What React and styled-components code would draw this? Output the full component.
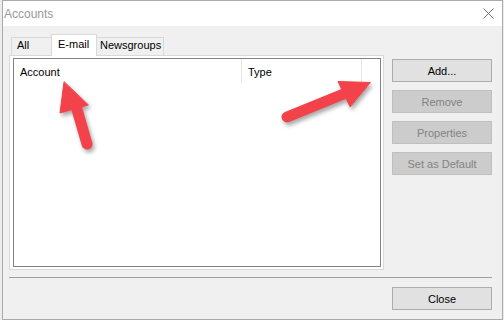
import React from 'react';
import styled, {createGlobalStyle} from 'styled-components';

const GlobalStyle = createGlobalStyle`
  html, body {
    margin: 0;
    padding: 0;
    background: #ececec;
  }
  body {
    font-family: 'Liberation Sans', Arial, sans-serif;
    font-size: 11px;
    color: #000;
  }
`

const Page = styled.div`
  position: relative;
  width: 504px;
  height: 320px;
  overflow: hidden;
`

const Window = styled.div`
  box-sizing: border-box;
  margin-left: 2px;
  width: 501px;
  height: 320px;
  border: 1px solid #aaaaaa;
  display: flex;
  flex-direction: column;
  background: #f0f0f0;
`

const TitleBar = styled.div`
  height: 25px;
  flex: none;
  background: #fff;
  display: flex;
  align-items: center;
  justify-content: space-between;
  padding: 0 8px 0 1px;
`

const Title = styled.span`
  font-size: 12px;
  color: #999;
`

const Body = styled.div`
  flex: 1;
  display: flex;
  flex-direction: column;
  padding: 8px 10px 0 6px;
`

const MainRow = styled.div`
  display: flex;
  gap: 8px;
`

const TabArea = styled.div`
  width: 375px;
  display: flex;
  flex-direction: column;
`

const TabStrip = styled.div`
  height: 21px;
  display: flex;
  align-items: flex-end;
  padding-left: 2px;
`

const Tab = styled.div`
  position: relative;
  box-sizing: border-box;
  width: ${p => p.$w}px;
  height: ${p => (p.$active ? 22 : 18)}px;
  margin-bottom: ${p => (p.$active ? -1 : 0)}px;
  margin-left: ${p => (p.$first ? 0 : -1)}px;
  padding: ${p => (p.$active ? 2 : 0)}px 0 0 ${p => p.$pad}px;
  line-height: 15px;
  border: 1px solid #d9d9d9;
  border-bottom: none;
  background: ${p => (p.$active ? '#fff' : '#f0f0f0')};
  z-index: ${p => (p.$active ? 1 : 0)};
  white-space: nowrap;
`

const Panel = styled.div`
  box-sizing: border-box;
  height: 215px;
  border: 1px solid #d9d9d9;
  background: #fff;
  padding: 2px 2px 2px 3px;
  display: flex;
`

const ListView = styled.div`
  flex: 1;
  border: 1px solid #828282;
  background: #fff;
`

const Header = styled.div`
  display: flex;
  height: 24px;
`

const HeaderCell = styled.div`
  box-sizing: border-box;
  width: ${p => p.$w}px;
  border-right: 1px solid #e5e5e5;
  padding: 2px 0 0 6px;
  line-height: 22px;
`

const ButtonColumn = styled.div`
  width: 100px;
  margin-top: 25px;
  display: flex;
  flex-direction: column;
  gap: 8px;
`

const Button = styled.button`
  box-sizing: border-box;
  width: 100px;
  height: 23px;
  padding: 0;
  font-family: inherit;
  font-size: 11px;
  background: ${p => (p.disabled ? '#cccccc' : '#e1e1e1')};
  border: 1px solid ${p => (p.disabled ? '#bfbfbf' : '#adadad')};
  color: ${p => (p.disabled ? '#838383' : '#000')};
`

const Separator = styled.div`
  margin-top: 7px;
  height: 1px;
  background: #a0a0a0;
`

const Footer = styled.div`
  margin-top: 9px;
  display: flex;
  justify-content: flex-end;
`

const Overlay = styled.svg`
  position: absolute;
  left: 0;
  top: 0;
  pointer-events: none;
  filter: drop-shadow(2px 3px 2px rgba(0, 0, 0, 0.35));
`

const arrowRed = '#f4424a'

const CloseIcon = () => (
    <svg width="11" height="11" viewBox="0 0 11 11">
        <path d="M0.5 0.5 L10.5 10.5 M10.5 0.5 L0.5 10.5" stroke="#707070" strokeWidth="1" fill="none"/>
    </svg>
)

const Arrows = () => (
    <Overlay width="504" height="320" viewBox="0 0 504 320">
        <g fill={arrowRed} stroke={arrowRed} strokeLinecap="round">
            <line x1="76" y1="106" x2="87" y2="144" strokeWidth="11"/>
            <polygon points="64,82 60,113 88,105" strokeWidth="1" strokeLinejoin="round"/>
            <line x1="287" y1="117" x2="346" y2="93" strokeWidth="11"/>
            <polygon points="370,82.5 338,81.5 350,106.5" strokeWidth="1" strokeLinejoin="round"/>
        </g>
    </Overlay>
)

const App = () => (
    <Page>
        <GlobalStyle/>
        <Window>
            <TitleBar>
                <Title>Accounts</Title>
                <CloseIcon/>
            </TitleBar>
            <Body>
                <MainRow>
                    <TabArea>
                        <TabStrip>
                            <Tab $first $w={41} $pad={5}>All</Tab>
                            <Tab $active $w={46} $pad={6}>E-mail</Tab>
                            <Tab $w={68} $pad={3}>Newsgroups</Tab>
                        </TabStrip>
                        <Panel>
                            <ListView>
                                <Header>
                                    <HeaderCell $w={228}>Account</HeaderCell>
                                    <HeaderCell $w={120}>Type</HeaderCell>
                                </Header>
                            </ListView>
                        </Panel>
                    </TabArea>
                    <ButtonColumn>
                        <Button>Add...</Button>
                        <Button disabled>Remove</Button>
                        <Button disabled>Properties</Button>
                        <Button disabled>Set as Default</Button>
                    </ButtonColumn>
                </MainRow>
                <Separator/>
                <Footer>
                    <Button>Close</Button>
                </Footer>
            </Body>
        </Window>
        <Arrows/>
    </Page>
)

export default App;
